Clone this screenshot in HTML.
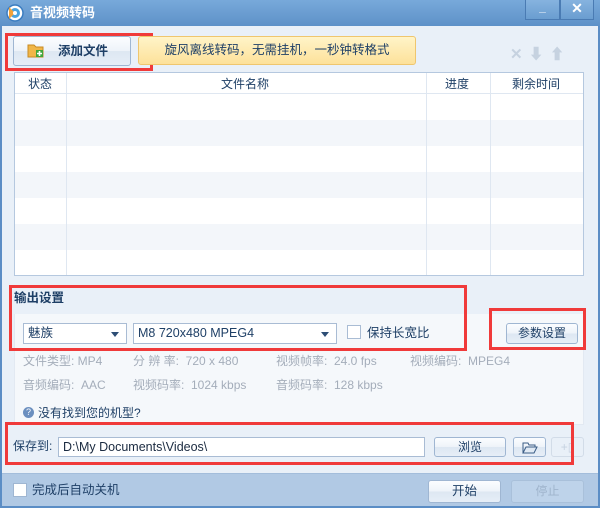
<!DOCTYPE html>
<html><head><meta charset="utf-8"><style>
*{box-sizing:border-box;margin:0;padding:0}
body{width:600px;height:508px;overflow:hidden;font-family:"Liberation Sans","Noto Sans CJK SC",sans-serif;font-size:12px;line-height:1.25;color:#1e3f66;background:#5b8dc5;position:relative}
.a{position:absolute}
.win{left:2px;top:26px;width:596px;height:480px;background:#e9f0f8}
.red{position:absolute;border:3px solid #f03a3a}
.btn{position:absolute;border:1px solid #9fb6d2;border-radius:3px;background:linear-gradient(#fbfdff 0,#eef3f9 50%,#dde7f2 51%,#e6eef7 100%);text-align:center;color:#1e3f66}
.sel{position:absolute;border:1px solid #a9bcd4;background:#fff;height:21px;line-height:19px;padding-left:4px;font-size:12.5px}
.sel:after{content:"";position:absolute;right:7px;top:8px;border:4px solid transparent;border-top:5px solid #2d4d75;border-bottom:0}
.g{color:#a4adba}
.row{position:absolute;left:0;width:568px;height:26px}
</style></head><body>
<div class="a" style="left:0;top:0;width:600px;height:26px;background:linear-gradient(#78a9da,#5d91c8)"></div>
<svg class="a" style="left:6px;top:4px" width="18" height="18"><circle cx="9" cy="9" r="8" fill="#fff" stroke="#3a7cc0" stroke-width="1.5"/><circle cx="9" cy="9" r="5" fill="#4aa3e0"/><path d="M3 3 L9 9 L3 15Z" fill="#f2a23a"/><circle cx="9" cy="9" r="2" fill="#fff"/></svg>
<div class="a" style="left:30px;top:5px;color:#fff;font-size:13px;font-weight:bold">音视频转码</div>
<div class="a" style="left:525px;top:0;width:35px;height:20px;border:1px solid #4a7bb3;border-top:0;background:linear-gradient(#86b3df,#6a9dd0);color:#fff;text-align:center;font-weight:bold">_</div>
<div class="a" style="left:560px;top:0;width:34px;height:20px;border:1px solid #4a7bb3;border-top:0;background:linear-gradient(#86b3df,#6a9dd0);color:#fff;text-align:center;font-size:14px;font-weight:bold">✕</div>
<div class="a win"></div>

<div class="btn" style="left:13px;top:36px;width:118px;height:30px;line-height:28px;font-weight:bold;font-size:12.5px;padding-left:22px">添加文件</div>
<svg class="a" style="left:27px;top:42px" width="18" height="16"><path d="M1 3h6l2 2h7v10H1z" fill="#f0b648" stroke="#c88a22"/><rect x="9" y="8" width="7" height="7" fill="#3fa63a"/><path d="M12.5 9v5M10 11.5h5" stroke="#fff" stroke-width="1.6"/></svg>
<div class="red" style="left:5px;top:33px;width:148px;height:38px"></div>
<div class="a" style="left:138px;top:36px;width:278px;height:29px;border:1px solid #efc66e;border-radius:3px;background:linear-gradient(#fff4c8,#fde19a);text-align:center;line-height:27px;font-size:12.5px">旋风离线转码，无需挂机，一秒钟转格式</div>
<div class="a" style="left:510px;top:46px;color:#c6d2e0;font-size:15px;font-weight:bold;letter-spacing:6px">✕⬇⬆</div>

<div class="a" style="left:14px;top:72px;width:570px;height:204px;border:1px solid #b5c8df;background:#fff;overflow:hidden">
<div class="row" style="top:0;height:21px;border-bottom:1px solid #dfe7f1"></div>
<div class="row" style="top:47px;background:#f3f6fa"></div>
<div class="row" style="top:99px;background:#f3f6fa"></div>
<div class="row" style="top:151px;background:#f3f6fa"></div>
<div class="a" style="left:51px;top:0;width:1px;height:204px;background:#dfe7f1"></div>
<div class="a" style="left:411px;top:0;width:1px;height:204px;background:#dfe7f1"></div>
<div class="a" style="left:475px;top:0;width:1px;height:204px;background:#dfe7f1"></div>
<div class="a" style="left:13px;top:4px">状态</div>
<div class="a" style="left:206px;top:4px">文件名称</div>
<div class="a" style="left:430px;top:4px">进度</div>
<div class="a" style="left:497px;top:4px">剩余时间</div>
</div>

<div class="a" style="left:14px;top:314px;width:570px;height:111px;background:#f5f8fb;border:1px solid #e2e9f2;border-top:0"></div>
<div class="a" style="left:14px;top:291px;font-weight:bold;font-size:12.5px">输出设置</div>
<div class="sel" style="left:23px;top:323px;width:104px">魅族</div>
<div class="sel" style="left:133px;top:323px;width:204px">M8 720x480 MPEG4</div>
<div class="a" style="left:347px;top:325px;width:14px;height:14px;border:1px solid #a9bcd4;background:#fff"></div>
<div class="a" style="left:367px;top:326px;font-size:12.5px">保持长宽比</div>
<div class="red" style="left:9px;top:285px;width:458px;height:66px"></div>
<div class="btn" style="left:506px;top:323px;width:72px;height:21px;line-height:19px">参数设置</div>
<div class="red" style="left:489px;top:308px;width:97px;height:42px"></div>

<div class="a g" style="left:23px;top:354px">文件类型: MP4</div>
<div class="a g" style="left:133px;top:354px">分 辨 率: &nbsp;720 x 480</div>
<div class="a g" style="left:276px;top:354px">视频帧率: &nbsp;24.0 fps</div>
<div class="a g" style="left:410px;top:354px">视频编码: &nbsp;MPEG4</div>
<div class="a g" style="left:23px;top:378px">音频编码: &nbsp;AAC</div>
<div class="a g" style="left:133px;top:378px">视频码率: &nbsp;1024 kbps</div>
<div class="a g" style="left:276px;top:378px">音频码率: &nbsp;128 kbps</div>
<div class="a" style="left:23px;top:407px;width:11px;height:11px;border-radius:50%;background:#6b8fbf;color:#fff;font-size:9px;line-height:11px;text-align:center">?</div>
<div class="a" style="left:38px;top:406px">没有找到您的机型?</div>

<div class="a" style="left:13px;top:439px">保存到:</div>
<div class="a" style="left:58px;top:437px;width:367px;height:20px;border:1px solid #a9bcd4;background:#fff;padding-left:4px;line-height:18px;font-size:12.5px;color:#1a2a40">D:\My Documents\Videos\</div>
<div class="btn" style="left:434px;top:437px;width:72px;height:20px;line-height:18px">浏览</div>
<div class="btn" style="left:513px;top:437px;width:33px;height:20px"><svg width="16" height="14" style="margin-top:3px"><path d="M1 2h5l1 2h6v2H4L1 12zM1 12l3-6h11l-3 6z" fill="none" stroke="#3a5c85"/></svg></div>
<div class="a" style="left:551px;top:437px;width:33px;height:20px;border:1px solid #d2dce8;border-radius:3px;color:#c6d2e0;text-align:center;line-height:18px">+▯</div>
<div class="red" style="left:5px;top:422px;width:569px;height:43px"></div>

<div class="a" style="left:2px;top:473px;width:596px;height:33px;background:#b1c9e4;border-top:1px solid #a3bddb"></div>
<div class="a" style="left:13px;top:483px;width:14px;height:14px;background:#fff;border:1px solid #9fb6d2"></div>
<div class="a" style="left:32px;top:483px;font-size:12.5px">完成后自动关机</div>
<div class="btn" style="left:428px;top:480px;width:73px;height:23px;line-height:21px;font-size:12.5px">开始</div>
<div class="a" style="left:511px;top:480px;width:73px;height:23px;line-height:21px;border:1px solid #a9c0da;border-radius:3px;background:#bed3ea;color:#9fb4cc;text-align:center">停止</div>
</body></html>
